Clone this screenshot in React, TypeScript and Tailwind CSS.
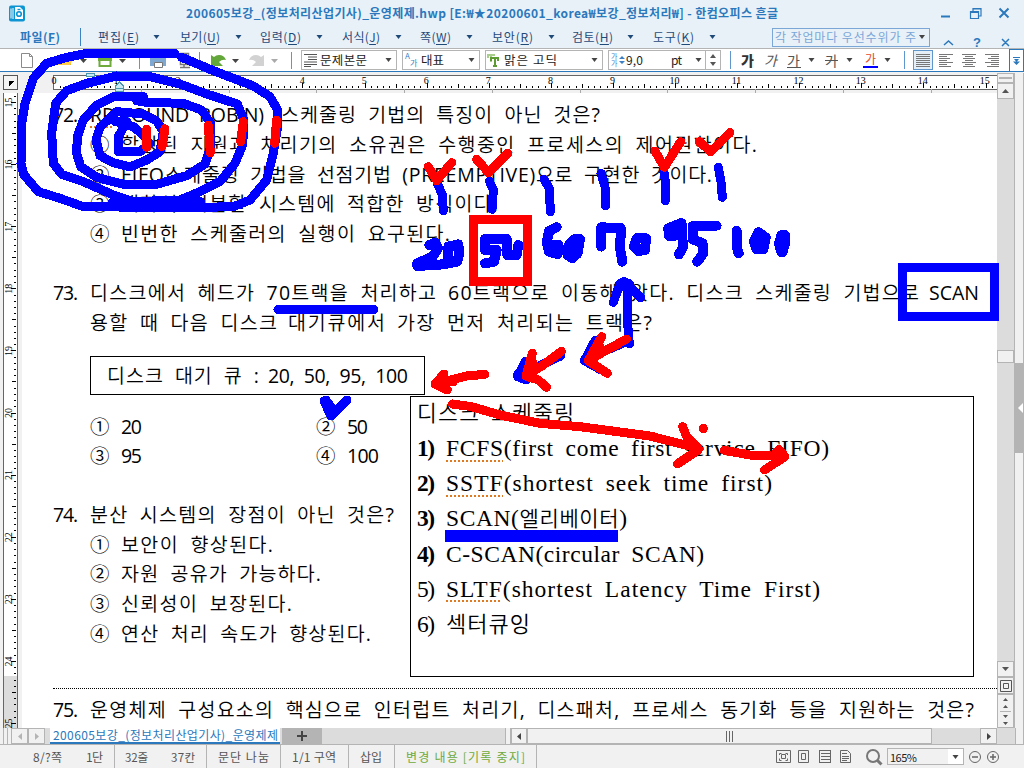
import React, { useLayoutEffect, useRef, useState } from "react";

const UI = "font-['Noto_Sans_CJK_KR',sans-serif]";

/** A run of text whose tracking is computed so that it fills a given width. */
function Fit({ w, className = "", children }: { w: number; className?: string; children: React.ReactNode }) {
  const ref = useRef<HTMLSpanElement>(null);
  const [ls, setLs] = useState(0);
  useLayoutEffect(() => {
    const el = ref.current;
    if (!el) return;
    const n = Math.max(1, Array.from(el.textContent || "").length - 1);
    setLs((w - el.getBoundingClientRect().width) / n);
  }, [w]);
  return (
    <span className={`block shrink-0 overflow-visible whitespace-nowrap ${className}`} style={{ width: w }}>
      <span ref={ref} className="inline-block whitespace-pre" style={{ letterSpacing: ls }}>
        {children}
      </span>
    </span>
  );
}

function Caret({ color = "text-[#444444]" }: { color?: string }) {
  return (
    <svg width="7" height="4" viewBox="0 0 7 4" className={`shrink-0 ${color}`}>
      <path d="M0.5 0h6L3.5 4z" fill="currentColor" />
    </svg>
  );
}

const menus: [string, string, number, number, string][] = [
  ["편집(", "E", 41, 82, "ml-[14px]"],
  ["보기(", "U", 40, 80, "ml-[15px]"],
  ["입력(", "D", 41, 82, "ml-[15px]"],
  ["서식(", "J", 38, 78, "ml-[15px]"],
  ["쪽(", "W", 31, 72, "ml-[15px]"],
  ["보안(", "R", 41, 80, "ml-[15px]"],
  ["검토(", "H", 41, 81, "ml-[14px]"],
  ["도구(", "K", 41, 82, "ml-[15px]"],
];

function TitleBar() {
  return (
    <div className="flex h-[26px] items-center">
      <svg width="16" height="17" viewBox="0 0 16 17" className="ml-[9px] shrink-0">
        <rect width="16" height="16" y="0.5" rx="2" fill="#0d94d2" />
        <path d="M2 3.5v10M4 3v11" stroke="#fff" strokeWidth="1" />
        <path d="M6 2h5l3 3v9H6z" fill="#fff" />
        <circle cx="10" cy="9" r="2.3" fill="none" stroke="#0d94d2" strokeWidth="1.6" />
        <path d="M8.5 4.5h3" stroke="#0d94d2" strokeWidth="1.4" />
      </svg>
      <Fit w={592} className="ml-[161px] text-[12px] font-bold leading-[18px] text-[#2b78bc]">
        200605보강_(정보처리산업기사)_운영제제.hwp [E:₩★20200601_korea₩보강_정보처리₩] - 한컴오피스 흔글
      </Fit>
      <svg width="80" height="20" viewBox="0 0 80 20" className="ml-[158px] shrink-0" fill="none" stroke="#2b78bc">
        <path d="M5 13.5h9" strokeWidth="2" />
        <path d="M34.500 8.500h8v7h-8zM34.500 9.500h8M37 8V5.500h8V13h-2M37 6h8" strokeWidth="1.2" />
        <path d="M63.500 5.500l9 9M72.500 5.500l-9 9" strokeWidth="2" />
      </svg>
    </div>
  );
}

function MenuBar() {
  return (
    <div className="flex h-[22px] items-center text-[12px] leading-[18px] text-[#1f4a78]">
      <Fit w={40} className="ml-[20px] font-bold text-[#2b78bc]">
        파일(<u className="underline-offset-2">F</u>)
      </Fit>
      <span className="ml-[20px] h-[18px] w-px bg-[#3b82c4]" />
      <span className="flex pl-[17px]">
        {menus.map(([a, k, w, cell, gap]) => (
          <span key={k} className="flex shrink-0 items-center" style={{ width: cell }}>
            <Fit w={w}>
              {a}
              <u className="underline-offset-2">{k}</u>)
            </Fit>
            <span className={gap}>
              <Caret color="text-[#1f4a78]" />
            </span>
          </span>
        ))}
      </span>
      <span className="ml-[37px] flex h-[19px] w-[158px] shrink-0 items-center justify-between border border-[#7ba7d7] pl-[2px] pr-[4px] text-[#7ba7d7]">
        <span className="w-[141px] overflow-hidden">
          <Fit w={141}>각 작업마다 우선수위가 주</Fit>
        </span>
        <svg width="6" height="4" viewBox="0 0 6 4">
          <path d="M0 0h6L3 4z" fill="#444" />
        </svg>
      </span>
      <svg width="84" height="22" viewBox="0 0 84 22" className="shrink-0" fill="none" stroke="#2b78bc" strokeWidth="1.500">
        <path d="M14 19l4.500-4 4.500 4M72 13l7 7M79 13l-7 7" />
        <text x="43" y="21" fontSize="13" fontWeight="bold" fill="#2b78bc" stroke="none" fontFamily="Liberation Sans, sans-serif">?</text>
      </svg>
    </div>
  );
}

function Sep({ className }: { className: string }) {
  return <span className={`h-[18px] w-px shrink-0 bg-[#5f97cc] ${className}`} />;
}

function Combo({ icon, text, w, tw }: { icon: React.ReactNode; text: string; w: number; tw: number }) {
  return (
    <span className="mr-[5px] flex h-[20px] shrink-0 items-center border border-[#b4b4b4] bg-white" style={{ width: w }}>
      <svg width="18" height="18" viewBox="0 0 18 18" className="shrink-0">
        {icon}
      </svg>
      <Fit w={tw} className="text-[12.500px] leading-[18px] text-[#222]">{text}</Fit>
      <span className="ml-auto mr-[4px]">
        <Caret />
      </span>
    </span>
  );
}

function AlignIcon({ d, on }: { d: string; on?: boolean }) {
  return (
    <span className={`flex h-[20px] w-[20px] shrink-0 items-center justify-center border ${on ? "border-[#5f97cc] bg-[#e5eff8]" : "border-transparent"}`}>
      <svg width="14" height="14" viewBox="0 0 14 14" stroke="#777" strokeWidth="1" shapeRendering="crispEdges">
        <path d={d} />
      </svg>
    </span>
  );
}

function ToolBar() {
  return (
    <div className="flex h-[23px] items-center border-t border-[#b4b4b4] bg-white">
      <svg width="301" height="21" viewBox="0 0 301 21" className="shrink-0">
        <path d="M21.500 3.500h8l3 3v11h-11zM29.500 3.500v3h3" fill="#fff" stroke="#8a8a8a" />
        <path d="M58 15V5h5l1 2h7v8z" fill="#e9a92c" />
        <path d="M60 9h13l-3 6H58z" fill="#ffcb45" />
        <path d="M80 9h7l-3.500 4zM119 9h7l-3.500 4zM232 9h7l-3.500 4z" fill="#444" />
        <path d="M271 9h7l-3.500 4z" fill="#aaa" />
        <path d="M99.500 4v12h11V4" fill="#fff" stroke="#6eaa3c" strokeWidth="2" />
        <path d="M98 8h14v3H98z" fill="#6eaa3c" />
        <path d="M139.500 2v17M199.500 2v17M291.500 2v17" stroke="#5f97cc" />
        <path d="M150 7h16v9h-16z" fill="#7ea7d1" />
        <path d="M154.500 12.500h8v5h-8zM153 4h10v3" fill="#fff" stroke="#777" />
        <path d="M180.500 3.500h8v11h-8zM184 15v3M180 17.500h10" fill="#fff" stroke="#777" strokeWidth="1.500" />
        <path d="M211 5v11h12l-4-4q3-3 7-2-2-5-7-5-3 0-5 2z" fill="#63a63a" />
        <path d="M264 5v11h-12l4-4q-3-3-7-2 2-5 7-5 3 0 5 2z" fill="#d2d2d2" />
      </svg>
      <Combo w={96} tw={47} text="문제본문" icon={<path d="M2 3.500h13M6 6h9M6 8.500h9M2 11h13M2 13.500h13M2 15.500h7" stroke="#555" />} />
      <Combo
        w={78}
        tw={23}
        text="대표"
        icon={
          <g fill="#3b7fc4" fontFamily="Noto Sans CJK KR, sans-serif">
            <text x="2" y="8" fontSize="8">A</text>
            <text x="7" y="15" fontSize="8">가</text>
          </g>
        }
      />
      <Combo
        w={118}
        tw={53}
        text="맑은 고딕"
        icon={
          <g fill="none" shapeRendering="crispEdges">
            <path d="M1 4h8M2 4v3M5 4v7" stroke="#a9cd8c" strokeWidth="2" />
            <path d="M4 7h9M5 6v4M12 6v4M8.500 6v9M6.500 15h4" stroke="#5d9b33" strokeWidth="2" />
          </g>
        }
      />
      <span className="flex h-[20px] w-[113px] shrink-0 items-center border border-[#b4b4b4] text-[12px] leading-[18px] text-[#222]">
        <svg width="17" height="18" viewBox="0 0 17 18" fill="#3b7fc4" fontFamily="Noto Sans CJK KR, sans-serif">
          <text x="2" y="8" fontSize="7">가</text>
          <text x="2" y="15" fontSize="7">가</text>
          <path d="M10 8l3-3 3 3zM10 10l3 3 3-3z" />
        </svg>
        <Fit w={17}>9,0</Fit>
        <span className="ml-[28px]"><Fit w={11}>pt</Fit></span>
        <span className="ml-[13px]"><Caret /></span>
        <span className="ml-auto flex h-full w-[15px] flex-col items-center justify-center gap-[4px] border-l border-[#b4b4b4]">
          <svg width="6" height="4"><path d="M0 4h6L3 0z" fill="#555" /></svg>
          <svg width="6" height="4"><path d="M0 0h6L3 4z" fill="#555" /></svg>
        </span>
      </span>
      <Sep className="ml-[9px]" />
      <span className="flex shrink-0 items-center text-[14px] leading-[16px] text-[#555]">
        <span className="ml-[10px] w-[23px] font-black text-[#333]">가</span>
        <span className="w-[23px] italic">가</span>
        <span className="w-[14px] border-b border-[#555] leading-[14px]">가</span>
        <span className="ml-[7px] w-[17px]"><Caret /></span>
        <span className="w-[15px] line-through">가</span>
        <span className="ml-[6px] w-[17px]"><Caret /></span>
        <span className="h-[16px] w-[15px] border-b-2 border-[#0000ff] text-center text-[12px] leading-[13px] text-[#e8481c]">가</span>
        <span className="ml-[6px]"><Caret /></span>
      </span>
      <Sep className="ml-[13px]" />
      <span className="flex gap-[3px] pl-[8px]">
        <AlignIcon on d="M0 1.500h14M0 3.500h14M0 5.500h14M0 7.500h14M0 9.500h14M0 11.500h14M0 13.500h14" />
        <AlignIcon d="M0 1.500h14M0 3.500h8M0 5.500h11M0 7.500h8M0 9.500h14M0 11.500h8M0 13.500h12" />
        <AlignIcon d="M0 1.500h14M3 3.500h8M1 5.500h12M3 7.500h8M0 9.500h14M3 11.500h8M1 13.500h12" />
        <AlignIcon d="M0 1.500h14M6 3.500h8M3 5.500h11M6 7.500h8M0 9.500h14M6 11.500h8M2 13.500h12" />
      </span>
      <span className="ml-auto flex h-full w-[15px] items-center justify-center border border-b-0 border-[#2b78bc]">
        <svg width="7" height="8" viewBox="0 0 7 8" fill="#2b78bc"><path d="M0 0h7v1H0zM1 2h5L3.500 5zM3 2h1v4H3zM0 4.500h7L3.500 8z" /></svg>
      </span>
    </div>
  );
}

function HRuler() {
  const ticks = [];
  for (let i = 1; i <= 151; i++) {
    const x = Math.round(54 + i * 6.21) + 0.5;
    const h = i % 10 === 0 ? 5 : i % 5 === 0 ? 4 : 2;
    ticks.push(`M${x} ${15 - h}v${h}`);
  }
  const nums = Array.from({ length: 16 }, (_, i) => i);
  const marks = [141, 229, 316, 404, 492, 580, 667, 755, 843, 931];
  return (
    <svg width="997" height="20" viewBox="0 0 997 20" className="block shrink-0" shapeRendering="crispEdges">
      <rect width="997" height="20" fill="#f1f1f1" />
      <path d="M53.500 2.500H997V16.500H53.500z" fill="#fff" stroke="#666" />
      <rect x="3.500" y="2.500" width="14" height="14" fill="#f4f4f4" stroke="#555" />
      <path d="M9 8h5l-5 5z" fill="#000" />
      <path d={ticks.join("")} stroke="#000" />
      <path d={marks.map((m) => `M${m}.5 16v5`).join("")} stroke="#aaa" />
      <g fontFamily="Liberation Serif, serif" fontSize="10" textAnchor="middle" fill="#000">
        {nums.map((n) => (
          <text key={n} x={54 + n * 62.05} y="11">{n}</text>
        ))}
      </g>
      <path d="M86.500 0v3h8V0z" fill="#c9eaf2" stroke="#4a97ad" />
      <path d="M115.500 18v-5l4-4 4 4v5zM115 15.500h9" fill="#c9eaf2" stroke="#4a97ad" />
    </svg>
  );
}

function VRuler() {
  const ticks = [];
  for (let i = -1; i <= 101; i++) {
    const y = Math.round(9 + i * 6.21) + 0.5;
    const w = i % 10 === 0 ? 5 : i % 5 === 0 ? 4 : 2;
    ticks.push(`M${16 - w} ${y}h${w}`);
  }
  const nums = Array.from({ length: 11 }, (_, i) => i);
  return (
    <svg width="22" height="635" viewBox="0 0 22 635" className="block shrink-0" shapeRendering="crispEdges">
      <rect width="22" height="635" fill="#f1f1f1" />
      <path d="M3.500 0V635M17.500 0V635" stroke="#666" />
      <rect x="4" width="13" height="583" fill="#fff" />
      <rect x="4" y="583" width="13" height="52" fill="#dcdcdc" />
      <path d={ticks.join("")} stroke="#000" />
      <g fontFamily="Liberation Serif, serif" fontSize="10" textAnchor="middle">
        {nums.map((n) => (
          <text key={n} transform={`translate(12 ${9.5 + n * 62.1}) rotate(-90)`}>{15 + n}</text>
        ))}
      </g>
    </svg>
  );
}

const wavy = "underline decoration-[#e07a20] decoration-dotted decoration-[1.5px] underline-offset-[4px]";

function Q({ n, w, children }: { n: string; w: number; children: React.ReactNode }) {
  return (
    <div className="flex h-[29.7px] items-center pl-[31px]">
      <Fit w={25}>{n}</Fit>
      <Fit w={w} className="ml-[12px] [word-spacing:5px]">{children}</Fit>
    </div>
  );
}

function A({ n, w, children }: { n: string; w: number; children: React.ReactNode }) {
  return (
    <div className="flex h-[29.7px] items-center pl-[68px]">
      <span className="w-[31px]">{n}</span>
      <Fit w={w} className="[word-spacing:5px]">{children}</Fit>
    </div>
  );
}

function ListItem({ n, w, bold, children }: { n: string; w: number; bold?: boolean; children: React.ReactNode }) {
  return (
    <div className="flex h-[35.200px] items-center">
      <Fit w={18} className={bold ? "font-bold" : ""}>{n}</Fit>
      <Fit w={w} className="ml-[11px] [word-spacing:5px]">{children}</Fit>
    </div>
  );
}

function Page() {
  return (
    <div className="relative flex h-[635px] w-[975px] flex-col overflow-hidden bg-white pt-[7px] font-['Open_Sans','Noto_Sans_CJK_KR_DemiLight','Noto_Sans_CJK_KR',sans-serif] text-[19.500px] leading-[29px] text-black">
      <div className="flex h-[29.700px] items-center pl-[31px]">
        <Fit w={25}>72.</Fit>
        <Fit w={174} className="ml-[12px] [word-spacing:5px]"><span className={wavy}>RR</span>(ROUND ROBIN)</Fit>
        <Fit w={319} className="ml-[17px] [word-spacing:5px]">스케줄링 기법의 특징이 아닌 것은?</Fit>
      </div>
      <A n="①" w={636}>할당된 지원과 처리기의 소유권은 수행중인 프로세스의 제어권한이다.</A>
      <A n="②" w={591}>FIFO스케줄링 기법을 선점기법 (PREEMPTIVE)으로 구현한 것이다.</A>
      <A n="③" w={377}>대화식 시분할 시스템에 적합한 방식이다.</A>
      <A n="④" w={329}>빈번한 스케줄러의 실행이 요구된다.</A>
      <div className="h-[29.500px]" />
      <div className="flex h-[29.700px] items-center pl-[31px]">
        <Fit w={25}>73.</Fit>
        <Fit w={346} className="ml-[12px] [word-spacing:5px]">디스크에서 헤드가 70트랙을 처리하고</Fit>
        <Fit w={471} className="ml-[12px] [word-spacing:5px]">60트랙으로 이동해 왔다. 디스크 스케줄링 기법으로</Fit>
        <Fit w={50} className="ml-[10px]">SCAN</Fit>
      </div>
      <div className="flex h-[29.700px] items-center pl-[68px]">
        <Fit w={187} className="[word-spacing:5px]">용할 때 다음 디스크</Fit>
        <Fit w={97} className={`ml-[11px] ${wavy}`}>대기큐에서</Fit>
        <Fit w={255} className="ml-[12px] [word-spacing:5px]">가장 먼저 처리되는 트랙은?</Fit>
      </div>
      <div className="ml-[68px] mt-[19px] flex h-[39px] w-[335px] shrink-0 items-center border border-black pl-[16px]">
        <Fit w={152} className="[word-spacing:5px]">디스크 대기 큐 :</Fit>
        <Fit w={140} className="ml-[9px] [word-spacing:5px]">20, 50, 95, 100</Fit>
      </div>
      <div className="mt-[16px] grid w-[400px] grid-cols-[226px_1fr]">
        <A n="①" w={21}>20</A>
        <A n="②" w={21}>50</A>
        <A n="③" w={21}>95</A>
        <A n="④" w={32}>100</A>
      </div>
      <div className="h-[29px] shrink-0" />
      <Q n="74." w={304}>분산 시스템의 장점이 아닌 것은?</Q>
      <A n="①" w={152}>보안이 향상된다.</A>
      <A n="②" w={200}>자원 공유가 가능하다.</A>
      <A n="③" w={171}>신뢰성이 보장된다.</A>
      <A n="④" w={250}>연산 처리 속도가 향상된다.</A>
      <div className="ml-[31px] mt-[40px] shrink-0 border-t border-dotted border-black" />
      <div className="mt-[6px]">
        <Q n="75." w={884}>운영체제 구성요소의 핵심으로 인터럽트 처리기, 디스패처, 프로세스 동기화 등을 지원하는 것은?</Q>
      </div>
      <div className="absolute left-[388px] top-[303px] h-[281px] w-[564px] border border-black bg-white pl-[6px] font-['Liberation_Serif','Noto_Sans_CJK_KR_DemiLight','Noto_Sans_CJK_KR',serif] text-[23.500px] leading-[35px]">
        <div className="h-[34px] text-[21.500px] font-[350]"><Fit w={157} className="[word-spacing:4px]">디스크 스케줄링</Fit></div>
        <ListItem bold n="1)" w={383}><span className={wavy}>FCFS</span>(first come first service FIFO)</ListItem>
        <ListItem bold n="2)" w={326}><span className={wavy}>SSTF</span>(shortest seek time first)</ListItem>
        <ListItem bold n="3)" w={181}>SCAN(<span className="text-[21px] font-[350]">엘리베이터</span>)</ListItem>
        <ListItem bold n="4)" w={258}>C-SCAN(circular SCAN)</ListItem>
        <ListItem n="5)" w={374}><span className={wavy}>SLTF</span>(shortest Latency Time First)</ListItem>
        <ListItem n="6)" w={84}><span className="text-[22px] font-[350]">섹터큐잉</span></ListItem>
      </div>
    </div>
  );
}

const btn = "flex shrink-0 items-center justify-center border border-[#b4b4b4] bg-[#f1f1f1]";

function VScroll() {
  return (
    <div className="flex h-[655px] w-[17px] shrink-0 flex-col bg-[#dcdcdc]">
      <div className={`${btn} h-[10px]`}><span className="h-[2px] w-[13px] bg-[#b4b4b4]" /></div>
      <div className={`${btn} h-[16px]`}><svg width="7" height="4"><path d="M0 4h7L3.500 0z" fill="#555" /></svg></div>
      <div className="h-[251px]" />
      <div className={`${btn} h-[13px]`} />
      <div className="flex-1" />
      <div className={`${btn} h-[16px]`}><svg width="7" height="4"><path d="M0 0h7L3.500 4z" fill="#555" /></svg></div>
      <div className={`${btn} h-[17px]`}>
        <svg width="12" height="12" fill="none" stroke="#555"><path d="M.5.5h11v11H.5zM3.500 3.500h5v5h-5z" /></svg>
      </div>
      <div className={`${btn} h-[34px]`}>
        <svg width="11" height="28" fill="#555">
          <path d="M3 4h5L5.500 1zM3 11h5L5.500 8zM3 18h5l-2.500 3zM3 25h5l-2.500 3z" />
          <path d="M0 14h11v1H0z" fill="#b4b4b4" />
        </svg>
      </div>
    </div>
  );
}

function TabRow() {
  return (
    <div className="flex h-[17px] shrink-0 items-stretch border-b border-[#b4b4b4] bg-[#dcdcdc]">
      <div className="flex w-[11px] justify-center bg-[#f1f1f1]"><span className="w-[5px] border-x border-[#b4b4b4]" /></div>
      <div className={`${btn} w-[17px]`}><svg width="4" height="7"><path d="M4 0v7L0 3.500z" fill="#b4b4b4" /></svg></div>
      <div className={`${btn} w-[17px]`}><svg width="4" height="7"><path d="M0 0v7l4-3.500z" fill="#b4b4b4" /></svg></div>
      <div className="w-[5px] bg-[#dcdcdc]" />
      <div className="w-[230px] border-b-2 border-[#2b78bc] bg-white pl-[3px] text-[12px] leading-[13px] text-[#2b78bc]">
        <Fit w={225}>200605보강_(정보처리산업기사)_운영제제</Fit>
      </div>
      <div className="ml-[2px] flex w-[40px] items-center justify-center bg-[#b4b4b4]">
        <svg width="10" height="10"><path d="M4 0h2v4h4v2H6v4H4V6H0V4h4z" fill="#444" /></svg>
      </div>
      <div className="w-[183px]" />
      <div className="w-[6px] border-x border-[#b4b4b4] bg-[#f1f1f1]" />
      <div className={`${btn} w-[16px]`}><svg width="4" height="7"><path d="M4 0v7L0 3.500z" fill="#444" /></svg></div>
      <div className={`${btn} w-[405px]`}><svg width="7" height="11"><path d="M0 0h1v11H0zM3 0h1v11H3zM6 0h1v11H6z" fill="#666" /></svg></div>
      <div className="w-[48px]" />
      <div className={`${btn} w-[17px]`}><svg width="4" height="7"><path d="M0 0v7l4-3.500z" fill="#444" /></svg></div>
      <div className="flex-1" />
      <div className="w-[9px] border-x border-[#b4b4b4] bg-[#f1f1f1]" />
    </div>
  );
}

function StatusBar() {
  const line = "h-full border-r border-[#b4b4b4] flex items-center shrink-0";
  return (
    <div className="flex h-[23px] shrink-0 items-center bg-[#f1f1f1] text-[12px] leading-[18px] text-[#555]">
      <span className={`${line} w-[115px] pl-[33px]`}>
        <Fit w={29}>8/?쪽</Fit>
        <span className="ml-[24px]"><Fit w={17}>1단</Fit></span>
      </span>
      <span className={`${line} w-[92px] pl-[10px]`}>
        <Fit w={23} className="text-[11.500px]">32줄</Fit>
        <span className="ml-[23px]"><Fit w={24} className="text-[11.500px]">37칸</Fit></span>
      </span>
      <span className={`${line} w-[74px] pl-[11px]`}><Fit w={51}>문단 나눔</Fit></span>
      <span className={`${line} w-[68px] pl-[11px]`}><Fit w={44}>1/1 구역</Fit></span>
      <span className={`${line} w-[46px] pl-[11px]`}><Fit w={22}>삽입</Fit></span>
      <span className={`${line} w-[142px] pl-[11px] text-[#6eaa3c]`}><Fit w={119}>변경 내용 [기록 중지]</Fit></span>
      <svg width="114" height="22" viewBox="0 0 114 22" className="ml-[236px] shrink-0" fill="none" stroke="#666">
        <path d="M3.500 4.500h14v12h-14zM6.500 9V7.500h2M12.500 7.500h2V9M14.500 12.500v2h-2M8.500 14.500h-2v-2M8.500 8.500h4v4h-4z" />
        <path d="M25.500 4.500h10v12h-10zM28.500 7.500h4v6h-4z" />
        <path d="M46 4.500h12M48 7.500h9M48 10.500h9M48 13.500h9M46 16.500h12M46.500 4v13M57.500 4v13" />
        <path d="M67.500 4.500h7l3 3v9h-10zM69 7.500h5M69 10.500h7M69 12.500h7M69 14.500h5" />
        <circle cx="100" cy="10" r="6" strokeWidth="2" stroke="#777" />
        <path d="M104.500 14.500l4 4" strokeWidth="3" stroke="#777" />
      </svg>
      <span className="flex h-[17px] w-[77px] shrink-0 items-center border border-[#b4b4b4] bg-[#f1f1f1] pl-[2px] text-[#222]">
        <Fit w={27} className="text-[11px]">165%</Fit>
        <span className="ml-auto flex h-full w-[15px] items-center justify-center bg-white"><Caret /></span>
      </span>
      <svg width="34" height="14" viewBox="0 0 34 14" className="ml-[3px] shrink-0" fill="none" stroke="#666">
        <circle cx="8" cy="7" r="5.500" />
        <circle cx="26" cy="7" r="5.500" />
        <path d="M5 7h6M23 7h6M26 4v6" strokeWidth="1.500" />
      </svg>
    </div>
  );
}

/** Freehand pen annotations drawn over the whole window. */
function Ink() {
  const t = 1 / 3;
  return (
    <svg
      width="1024" height="768" viewBox="0 0 1024 768" shapeRendering="crispEdges" fill="none"
      strokeLinecap="round" strokeLinejoin="round" className="pointer-events-none absolute left-0 top-0"
    >
      <g transform={`translate(0 40) scale(${t})`} strokeWidth="27">
        <g stroke="#0000ff">
          <path d="M525 41L400 40 260 40 200 52 140 70 100 115 75 190 65 250 63 370 72 405 115 455 180 475 250 500 560 503 700 500 750 480 800 420 820 340 833 260 833 210 810 170 760 138 640 92 545 52" />
          <path d="M450 110L350 108 260 130 200 152 167 190 155 280 160 370 185 403 250 425 340 465 400 485 540 480 600 455 660 425 705 370 728 315 732 240 712 192 620 162 540 132 450 110" />
          <path d="M430 170L340 170 290 195 250 240 232 290 230 340 242 380 290 412 370 433 470 433 560 407 615 372 632 320 632 250 605 210 550 190 440 187 410 182" />
          <path d="M350 215L430 222 470 243 490 275 480 335 440 360 390 381 340 368 300 347 288 300 300 262 350 215" />
          <path d="M350 245L400 260 435 290M355 335L355 290 370 262M355 333L420 335 450 310M345 245L380 245" />
          <path d="M340 487H600" strokeWidth="32" />
        </g>
        <path stroke="#ff0000" d="M440 268v54M495 266l-9 54M625 255l6 83M730 245l-8 60M830 240l-6 70" />
      </g>
      <g transform={`translate(400 120) scale(${t})`} strokeWidth="27">
        <path
          stroke="#0000ff"
          d="M112 190L127 225 130 272M268 183L280 210 276 268M432 178L448 205 451 275M603 160L615 200 617 258M790 145L797 190 796 242M955 142L963 185 967 232"
        />
        <path stroke="#ff0000" d="M85 140L110 182 155 128M230 118L266 158 323 100M765 93L793 142 842 65M898 65L932 95 990 38" />
        <g stroke="#0000ff" strokeWidth="30">
          <path d="M88 375L105 368 114 385 98 410 52 430 52 438 130 433 172 425 178 400 175 373 145 380 142 425" />
          <path d="M320 357L255 357 255 390 290 390 282 425 255 430M320 357L322 405 350 405 355 375" />
          <path d="M470 322L448 332 440 365 447 395 473 402 475 375 450 375M525 357L505 377 503 405 517 415 533 400 540 357 525 357" />
          <path d="M604 380L604 322 662 324 661 390 667 425M710 355L702 380 715 393 735 390 738 355 710 355" />
          <path d="M842 310L805 325 807 348 845 345 845 310M845 340L850 380 837 403M950 317L878 318 878 358 908 370 910 400 892 425" />
          <path d="M1010 332L1010 380 1016 400M1075 337L1062 365 1070 388 1090 388 1097 352 1075 337" />
          <path d="M1146 347L1139 370 1146 395 1153 370 1153 347" strokeWidth="34" />
        </g>
      </g>
      <rect x="473.500" y="219.500" width="54" height="62" stroke="#ff0000" strokeWidth="9" strokeLinejoin="miter" />
      <g transform={`translate(400 240) scale(${t})`} strokeWidth="27">
        <path stroke="#0000ff" d="M688 312L682 240 682 130M640 187L655 145 672 124 700 150 722 173M585 302L553 362 600 388M680 305L575 350M482 348L380 395M375 365L353 410 380 420" />
        <path stroke="#0000ff" strokeWidth="36" d="M357 405L370 410M662 135H685" />
        <path stroke="#ff0000" d="M680 297L620 330 565 362 605 290M565 362L622 400M575 345L600 320M484 334L430 375 378 408 397 340M378 408L415 420 440 442M390 385L400 370" />
        <path stroke="#ff0000" d="M254 403L200 408 105 432 132 402M105 432L142 450M125 410L130 435M115 425L160 425" />
        <path stroke="#ff0000" d="M157 492L215 500 300 525 420 550 540 560 750 588 895 625 860 590 848 560M895 630L832 672M910 565v1M973 631L1050 645 1155 650 1137 628M1155 650L1093 690M1130 635V650" />
      </g>
      <rect x="902.500" y="267.500" width="92" height="49" stroke="#0000ff" strokeWidth="9" strokeLinejoin="miter" />
      <path stroke="#0000ff" strokeWidth="9" d="M278 309.500H374" />
      <path stroke="#0000ff" strokeWidth="9" d="M324 401L331 416 347 400M326 400L332 408" />
      <path stroke="#0000ff" strokeWidth="12" strokeLinecap="butt" d="M445 535.500H618" />
    </svg>
  );
}

export default function App() {
  return (
    <div className={`relative flex h-[768px] w-[1024px] flex-col overflow-hidden bg-[#f1f1f1] ${UI}`}>
      <div className="h-[48px] shrink-0 bg-[#e9f1f8]">
        <TitleBar />
        <MenuBar />
      </div>
      <ToolBar />
      <div className="h-[2px] shrink-0 border-t border-[#2b78bc] bg-[#f1f1f1]" />
      <div className="flex h-[655px] shrink-0">
        <div className="flex w-[997px] shrink-0 flex-col">
          <HRuler />
          <div className="flex">
            <VRuler />
            <Page />
          </div>
        </div>
        <VScroll />
        <div className="flex flex-1 flex-col border-x border-[#b4b4b4] bg-[#f1f1f1]">
          <div className="mt-[290px] flex h-[90px] items-center justify-end bg-[#b4b4b4]">
            <svg width="5" height="10"><path d="M5 0v10L0 5z" fill="#fff" /></svg>
          </div>
        </div>
      </div>
      <TabRow />
      <StatusBar />
      <Ink />
    </div>
  );
}
